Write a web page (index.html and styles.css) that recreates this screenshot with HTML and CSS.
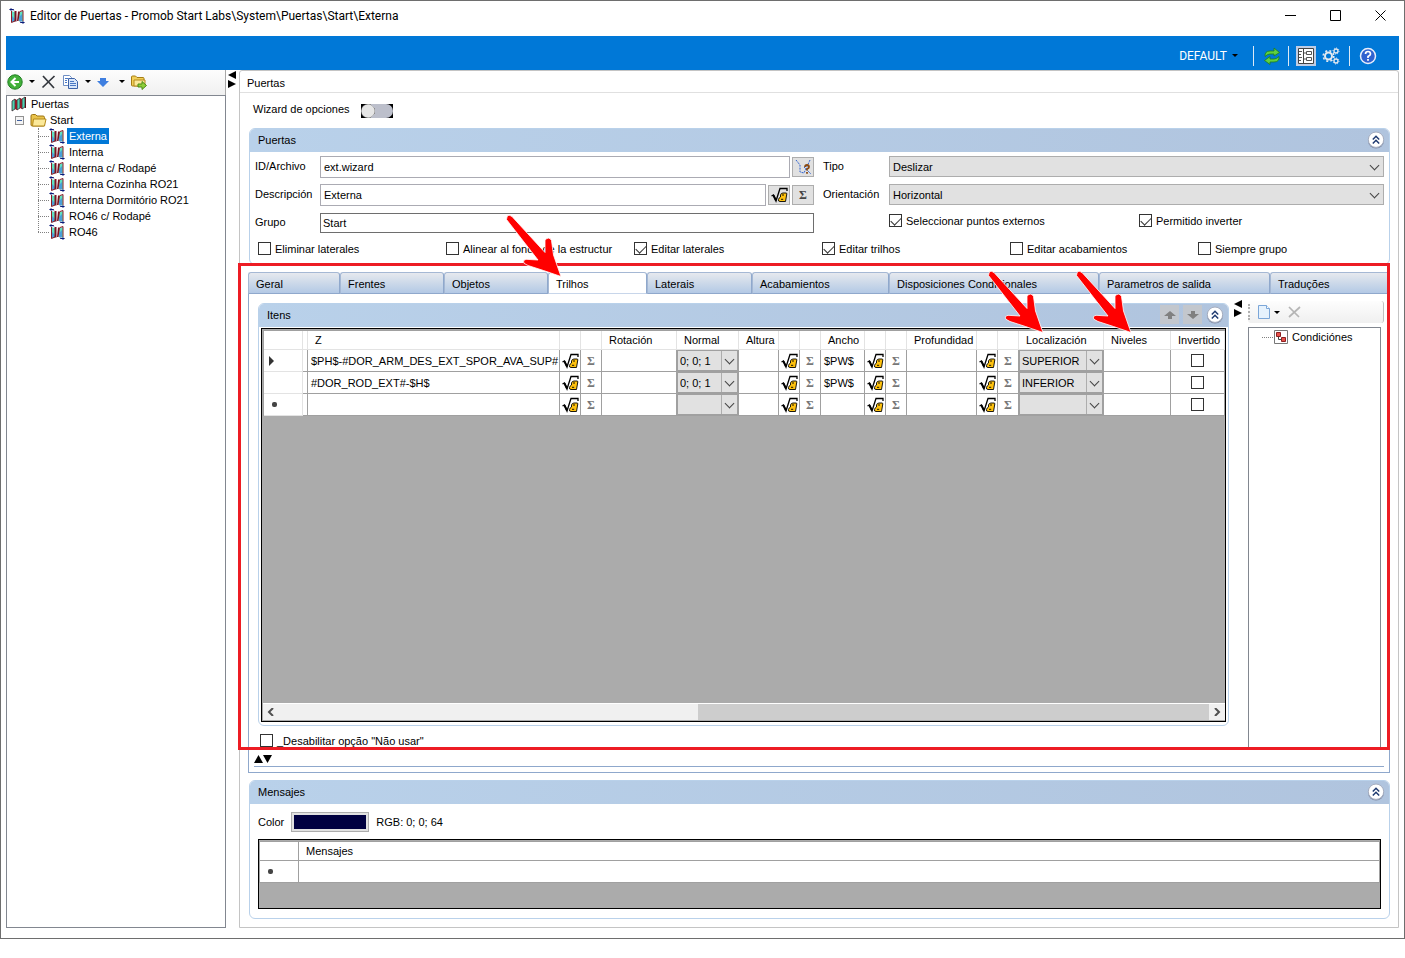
FILE: index.html
```html
<!DOCTYPE html>
<html lang="es">
<head>
<meta charset="UTF-8">
<meta name="viewport" content="width=device-width, initial-scale=1.0">
<title>Editor de Puertas</title>
<link rel="stylesheet" href="styles.css">
</head>
<body>

<!-- Shared icons -->
<svg class="sprite" aria-hidden="true">
    <symbol id="i-door" viewBox="0 0 16 16">
        <path d="M2.500 3l4 1.500v8.500l-4 1.500zM9.500 4.500L14 3v10.500l-4.500-.5z" fill="#5fe0c0"/>
        <path d="M3 8l3 3v2l-3 1zM10 9l3-3v7h-3z" fill="#4a9fd8"/>
        <path d="M5.500 3h2v10.500h-2zM9 3.500h2L9.500 13H8z" fill="#7a1220"/>
        <path d="M2.500 3v11.500M14 2.500V13M2.500 14.500l3.500-1.500M11 3.500l3-1" stroke="#8c1b28" fill="none"/>
        <path d="M0 1.500L2.500 0v1h2l1 1.500-3-.5v1zM16 14.500L13.500 16v-1h-2l-1-1.500 3 .5v-1z" fill="#0a1a78"/>
    </symbol>
    <symbol id="i-root" viewBox="0 0 16 16">
        <path d="M1 5l3-2v10l-3 2zM6 4l3-2v10l-3 2zM11 3l3-2v10l-3 2z" fill="#4fd0b0" stroke="#3a2a30" stroke-width=".8"/>
        <path d="M4 3l2 1v10l-2-1zM9 2l2 1v10l-2-1z" fill="#8c1b28"/>
        <path d="M14.500 1v11" stroke="#5a1018"/>
    </symbol>
    <symbol id="i-folder" viewBox="0 0 17 16">
        <path d="M1 4q0-1.500 1.500-1.500h3L7 4h6q1.500 0 1.500 1.500V13q0 1-1 1h-11Q1 14 1 13z" fill="#e9c34c" stroke="#9c7412"/>
        <path d="M3.500 7h12.500l-1.500 7H2.500z" fill="#fbe99a" stroke="#b58a1c"/>
    </symbol>
    <symbol id="i-formula" viewBox="0 0 17 16">
        <path d="M.5 9l2-1 2.500 6L9 1.500h7V4" fill="none" stroke="#000" stroke-width="1.300"/>
        <path d="M2.500 8.500l2.500 5" stroke="#000" stroke-width="2"/>
        <path d="M9.500 8Q10 6 12 6h3q1 0 .8 1L14.500 14.500H9q-2 0-1.500-2T9.500 10z" fill="#ffc20e" stroke="#000" stroke-width=".9"/>
        <path d="M11 8h2M10 12.300h2.200" stroke="#000" stroke-width=".9"/>
    </symbol>
    <symbol id="i-up2" viewBox="0 0 18 18">
        <circle cx="9" cy="9.500" r="8" fill="#7f8ba6"/>
        <circle cx="9" cy="8.700" r="7.700" fill="#fff" stroke="#a5adbf"/>
        <path d="M5.800 8.500L9 5.300l3.200 3.200M5.800 12.500L9 9.300l3.200 3.200" fill="none" stroke="#1f3a70" stroke-width="1.500"/>
    </symbol>
    <symbol id="i-arrow" viewBox="0 0 56 64">
        <path d="M.5 5.500L32 46 20 45.300q-4 1-2 4L22 51.500 37.500 56.500 55 62.500 52 54 47.500 41 45.500 26.500q-2.500-4.500-6.500-.5V38.500L6 2.500Q1-1 .5 5.500z" fill="#ff0000" stroke="#fff" stroke-width=".8"/>
    </symbol>
</svg>

<div class="window">
    <header class="titlebar">
        <svg class="icon"><use href="#i-door"/></svg>
        <h1>Editor de Puertas - Promob Start Labs\System\Puertas\Start\Externa</h1>
        <div class="window-buttons">
            <button aria-label="Minimizar"><svg viewBox="0 0 11 11"><path d="M0 5.500h11"/></svg></button>
            <button aria-label="Maximizar"><svg viewBox="0 0 11 11"><path d="M.5.500h10v10H.5z"/></svg></button>
            <button aria-label="Cerrar"><svg viewBox="0 0 11 11"><path d="M.5.500l10 10M10.500.500l-10 10"/></svg></button>
        </div>
    </header>

    <div class="ribbon">
        <button class="profile">DEFAULT<i class="caret"></i></button>
        <i class="sep"></i>
        <button class="tool refresh" aria-label="Actualizar">
            <svg viewBox="0 0 18 18"><path d="M2 9.500Q1.500 4 7 4h4V1l5.500 4.500L11 9V7H7Q4.500 7 2 9.500z" fill="#5fd040" stroke="#1c7d1c" stroke-width=".8"/><path d="M16 9.500q.5 5.500-5 5.500H7v2.500L1.500 13.500 7 9.500V12h4q2.500 0 5-2.500z" fill="#5fd040" stroke="#1c7d1c" stroke-width=".8"/></svg>
        </button>
        <i class="sep"></i>
        <button class="tool active" aria-label="Propiedades">
            <svg viewBox="0 0 18 18"><path d="M1.500 1.500h15v15h-15zM6.500 2v14" fill="#fff" stroke="#444"/><path d="M2 4.500h3M2 7.500h2M2 10.500h3M2 13.500h2M9.500 4.500h5v3h-5zM9.500 10.500h5v3h-5zM7 6h2M7 12h2" fill="none" stroke="#555"/></svg>
        </button>
        <button class="tool" aria-label="Opciones">
            <svg viewBox="0 0 18 18" fill="none" stroke="#e4e9f0"><circle cx="6.500" cy="9" r="3.500" stroke-width="2"/><circle cx="6.500" cy="9" r="5.300" stroke-width="1.600" stroke-dasharray="2 2.200"/><circle cx="14" cy="4" r="2" stroke-width="1.300"/><circle cx="14" cy="4" r="3" stroke-dasharray="1 1.300"/><circle cx="14" cy="14" r="2" stroke-width="1.300"/><circle cx="14" cy="14" r="3" stroke-dasharray="1 1.300"/></svg>
        </button>
        <i class="sep"></i>
        <button class="tool help" aria-label="Ayuda">
            <svg viewBox="0 0 18 18"><circle cx="9" cy="9" r="7.500" fill="#2f62d0" stroke="#e8eefb" stroke-width="1.500"/><path d="M6.500 7q0-2.500 2.500-2.500T11.500 7Q11.500 8.300 9 9.500V11" fill="none" stroke="#fff" stroke-width="1.700"/><path d="M8.100 12h1.800v1.700H8.100z" fill="#fff"/></svg>
        </button>
    </div>

    <div class="workspace">
        <aside class="sidebar">
            <div class="toolbar">
                <button aria-label="Volver"><svg viewBox="0 0 16 16"><circle cx="8" cy="8" r="7.200" fill="#42b03a" stroke="#1f7f22"/><path d="M12 8H5M8.500 4L4.500 8l4 4" fill="none" stroke="#fff" stroke-width="2"/></svg></button>
                <i class="caret"></i>
                <button aria-label="Eliminar"><svg viewBox="0 0 16 16"><path d="M2 2l11 12M13.500 2L1.500 13.500" stroke="#33373d" stroke-width="1.700"/></svg></button>
                <button aria-label="Copiar"><svg viewBox="0 0 16 16"><path d="M.5 1.500h6l2 2v8h-8z" fill="#fff" stroke="#6f8fc4"/><path d="M5.500 4.500h6l3 3v7h-9z" fill="#d8e6fa" stroke="#3c62a8"/><path d="M2 4.500h3M2 6.500h2M2 8.500h2M7 7.500h4M7 9.500h6M7 11.500h6" stroke="#4a78c4"/></svg></button>
                <i class="caret"></i>
                <button aria-label="Mover"><svg viewBox="0 0 16 16"><path d="M3 4h6v3h3l-6 6-6-6h3z" fill="#3f7fe0"/></svg></button>
                <i class="caret"></i>
                <button aria-label="Exportar"><svg viewBox="0 0 16 16"><path d="M.5 3q0-1 1-1h3L6 3.500h6q1 0 1 1V12H1.500q-1 0-1-1z" fill="#f2cf58" stroke="#a57d13"/><path d="M3 6h11v6H3z" fill="#fbe99a" stroke="#b58a1c"/><path d="M7 10h4V7.500l4.500 4-4.500 4V13H7z" fill="#8fce3a" stroke="#4b8b15"/></svg></button>
            </div>
            <div class="tree">
                <div class="node root"><svg class="icon"><use href="#i-root"/></svg>Puertas</div>
                <div class="node folder"><i class="minus"></i><svg class="icon"><use href="#i-folder"/></svg>Start</div>
                <ul>
                    <li><svg class="icon"><use href="#i-door"/></svg><span class="selected">Externa</span></li>
                    <li><svg class="icon"><use href="#i-door"/></svg><span>Interna</span></li>
                    <li><svg class="icon"><use href="#i-door"/></svg><span>Interna c/ Rodapé</span></li>
                    <li><svg class="icon"><use href="#i-door"/></svg><span>Interna Cozinha RO21</span></li>
                    <li><svg class="icon"><use href="#i-door"/></svg><span>Interna Dormitório RO21</span></li>
                    <li><svg class="icon"><use href="#i-door"/></svg><span>RO46 c/ Rodapé</span></li>
                    <li><svg class="icon"><use href="#i-door"/></svg><span>RO46</span></li>
                </ul>
            </div>
        </aside>

        <div class="splitter"><svg viewBox="0 0 9 18"><path d="M8 0v8L0 4zM0 9v8l8-4z"/></svg></div>

        <main class="editor">
            <h2>Puertas</h2>
            <div class="content">
                <div class="wizard">
                    <label for="wizard">Wizard de opciones</label>
                    <input type="checkbox" id="wizard" class="toggle">
                </div>

                <section class="panel">
                    <header><h3>Puertas</h3><button class="collapse" aria-label="Contraer"><svg><use href="#i-up2"/></svg></button></header>
                    <div class="form">
                        <label for="id">ID/Archivo</label>
                        <div class="field">
                            <input type="text" id="id" value="ext.wizard">
                            <button aria-label="Asistente"><svg viewBox="0 0 17 16"><path d="M1 1l4 5v7l4 1 6-13M9 8l7 7" fill="none" stroke="#2f62d0" stroke-dasharray="2 1"/><path d="M10 8q0-2 2-2t2 2q0 1.300-2 2v1.500M12 13v1.800" fill="none" stroke="#8a4a12" stroke-width="1.800"/></svg></button>
                        </div>
                        <label for="tipo" class="second">Tipo</label>
                        <span class="combo"><select id="tipo"><option>Deslizar</option></select></span>

                        <label for="desc">Descripción</label>
                        <div class="field">
                            <input type="text" id="desc" value="Externa">
                            <button aria-label="Fórmula"><svg><use href="#i-formula"/></svg></button>
                            <button class="sigma">Σ</button>
                        </div>
                        <label for="orient" class="second">Orientación</label>
                        <span class="combo"><select id="orient"><option>Horizontal</option></select></span>

                        <label for="grupo">Grupo</label>
                        <div class="field group"><input type="text" id="grupo" value="Start"></div>
                        <div class="checks two">
                            <label><input type="checkbox" checked>Seleccionar puntos externos</label>
                            <label><input type="checkbox" checked>Permitido inverter</label>
                        </div>
                    </div>
                    <div class="checks six">
                        <label><input type="checkbox">Eliminar laterales</label>
                        <label><input type="checkbox">Alinear al fondo de la estructur</label>
                        <label><input type="checkbox" checked>Editar laterales</label>
                        <label><input type="checkbox" checked>Editar trilhos</label>
                        <label><input type="checkbox">Editar acabamientos</label>
                        <label><input type="checkbox">Siempre grupo</label>
                    </div>
                </section>

                <section class="tabs">
                    <nav>
                        <button>Geral</button>
                        <button>Frentes</button>
                        <button>Objetos</button>
                        <button class="current">Trilhos</button>
                        <button>Laterais</button>
                        <button>Acabamientos</button>
                        <button>Disposiciones Condicionales</button>
                        <button>Parametros de salida</button>
                        <button>Traduções</button>
                    </nav>
                    <div class="page">
                        <div class="columns">
                            <div class="items">
                                <section class="panel">
                                    <header>
                                        <h3>Itens</h3>
                                        <button class="move" aria-label="Subir"><svg viewBox="0 0 12 12"><path d="M6 2l6 5H8v3H4V7H0z"/></svg></button>
                                        <button class="move" aria-label="Bajar"><svg viewBox="0 0 12 12"><path d="M6 10l6-5H8V2H4v3H0z"/></svg></button>
                                        <button class="collapse" aria-label="Contraer"><svg><use href="#i-up2"/></svg></button>
                                    </header>
                                    <div class="grid">
                                        <div class="grid-body">
                                            <table class="rails">
                                                <colgroup>
                                                    <col class="w-head"><col class="w-gap"><col class="w-z"><col class="w-btn"><col class="w-btn"><col class="w-rot"><col class="w-norm"><col class="w-alt"><col class="w-btn"><col class="w-btn"><col class="w-anc"><col class="w-btn"><col class="w-btn"><col class="w-prof"><col class="w-btn"><col class="w-btn"><col class="w-loc"><col class="w-niv"><col class="w-inv">
                                                </colgroup>
                                                <thead>
                                                    <tr><th></th><th></th><th>Z</th><th></th><th></th><th>Rotación</th><th>Normal</th><th>Altura</th><th></th><th></th><th>Ancho</th><th></th><th></th><th>Profundidad</th><th></th><th></th><th>Localización</th><th>Niveles</th><th>Invertido</th></tr>
                                                </thead>
                                                <tbody>
                                                    <tr>
                                                        <td class="mark"><i class="play"></i></td><td></td><td>$PH$-#DOR_ARM_DES_EXT_SPOR_AVA_SUP#</td>
                                                        <td class="fx"><svg><use href="#i-formula"/></svg></td><td class="sum">Σ</td><td></td>
                                                        <td class="pick"><span class="combo"><select aria-label="Normal"><option>0; 0; 1</option></select></span></td><td></td>
                                                        <td class="fx"><svg><use href="#i-formula"/></svg></td><td class="sum">Σ</td><td>$PW$</td>
                                                        <td class="fx"><svg><use href="#i-formula"/></svg></td><td class="sum">Σ</td><td></td>
                                                        <td class="fx"><svg><use href="#i-formula"/></svg></td><td class="sum">Σ</td>
                                                        <td class="pick"><span class="combo"><select aria-label="Localización"><option>SUPERIOR</option></select></span></td><td></td>
                                                        <td class="check"><input type="checkbox" aria-label="Invertido"></td>
                                                    </tr>
                                                    <tr>
                                                        <td class="mark"></td><td></td><td>#DOR_ROD_EXT#-$H$</td>
                                                        <td class="fx"><svg><use href="#i-formula"/></svg></td><td class="sum">Σ</td><td></td>
                                                        <td class="pick"><span class="combo"><select aria-label="Normal"><option>0; 0; 1</option></select></span></td><td></td>
                                                        <td class="fx"><svg><use href="#i-formula"/></svg></td><td class="sum">Σ</td><td>$PW$</td>
                                                        <td class="fx"><svg><use href="#i-formula"/></svg></td><td class="sum">Σ</td><td></td>
                                                        <td class="fx"><svg><use href="#i-formula"/></svg></td><td class="sum">Σ</td>
                                                        <td class="pick"><span class="combo"><select aria-label="Localización"><option>INFERIOR</option></select></span></td><td></td>
                                                        <td class="check"><input type="checkbox" aria-label="Invertido"></td>
                                                    </tr>
                                                    <tr>
                                                        <td class="mark"><i class="dot"></i></td><td></td><td></td>
                                                        <td class="fx"><svg><use href="#i-formula"/></svg></td><td class="sum">Σ</td><td></td>
                                                        <td class="pick"><span class="combo"><select aria-label="Normal"><option></option></select></span></td><td></td>
                                                        <td class="fx"><svg><use href="#i-formula"/></svg></td><td class="sum">Σ</td><td></td>
                                                        <td class="fx"><svg><use href="#i-formula"/></svg></td><td class="sum">Σ</td><td></td>
                                                        <td class="fx"><svg><use href="#i-formula"/></svg></td><td class="sum">Σ</td>
                                                        <td class="pick"><span class="combo"><select aria-label="Localización"><option></option></select></span></td><td></td>
                                                        <td class="check"><input type="checkbox" aria-label="Invertido"></td>
                                                    </tr>
                                                </tbody>
                                            </table>
                                        </div>
                                        <div class="scrollbar">
                                            <button aria-label="Izquierda"><svg viewBox="0 0 8 8"><path d="M6 0L2 4l4 4"/></svg></button>
                                            <div class="track"><div class="thumb"></div></div>
                                            <button aria-label="Derecha"><svg viewBox="0 0 8 8"><path d="M2 0l4 4-4 4"/></svg></button>
                                        </div>
                                    </div>
                                </section>
                                <label class="disable"><input type="checkbox">_Desabilitar opção "Não usar"</label>
                            </div>
                            <div class="splitter inner"><svg viewBox="0 0 9 18"><path d="M8 0v8L0 4zM0 9v8l8-4z"/></svg></div>
                            <div class="conditions">
                                <div class="toolbar">
                                    <i class="grip"></i>
                                    <button aria-label="Nuevo"><svg viewBox="0 0 16 16"><path d="M2.500 1.500h8l3 3v10h-11z" fill="#e6f2fd" stroke="#7ba6d8"/><path d="M10.500 1.500v3h3" fill="#fff" stroke="#7ba6d8"/></svg></button>
                                    <i class="caret"></i>
                                    <button aria-label="Eliminar"><svg viewBox="0 0 16 16"><path d="M3 3l10 10M14 3L3 13" stroke="#b5b5b5" stroke-width="1.700"/></svg></button>
                                </div>
                                <div class="tree">
                                    <div class="node"><i class="dots"></i><svg class="icon" viewBox="0 0 16 16"><path d="M1.500 1.500h13v13h-13z" fill="#fff" stroke="#777"/><path d="M3.500 3.500h4v4h-4zM8.500 8.500h4v4h-4z" fill="#e8504a" stroke="#8c2020"/><path d="M5.500 8v2.500h3" fill="none" stroke="#444"/></svg>Condiciónes</div>
                                </div>
                            </div>
                        </div>
                        <div class="fold"><svg viewBox="0 0 18 9"><path d="M0 8h9L4.500 0zM9 0h9l-4.500 8z"/></svg></div>
                    </div>

                    <div class="highlight"></div>
                    <svg class="pointer to-tab"><use href="#i-arrow"/></svg>
                    <svg class="pointer to-location"><use href="#i-arrow"/></svg>
                    <svg class="pointer to-levels"><use href="#i-arrow"/></svg>
                </section>

                <section class="panel messages">
                    <header><h3>Mensajes</h3><button class="collapse" aria-label="Contraer"><svg><use href="#i-up2"/></svg></button></header>
                    <div class="color-row">
                        <span>Color</span>
                        <button class="swatch" aria-label="Color"></button>
                        <span>RGB: 0; 0; 64</span>
                    </div>
                    <div class="grid">
                        <table class="log">
                            <colgroup><col class="w-head"><col></colgroup>
                            <thead><tr><th></th><th>Mensajes</th></tr></thead>
                            <tbody><tr><td class="mark"><i class="dot"></i></td><td></td></tr></tbody>
                        </table>
                    </div>
                </section>
            </div>
        </main>
    </div>
</div>

</body>
</html>
```
FILE: styles.css
```css
* {
    box-sizing: border-box;
}

body {
    margin: 0;
    background: #fff;
    color: #000;
    font: 11px/16px "Liberation Sans", Arial, sans-serif;
}

button, input, select {
    font: inherit;
    color: inherit;
    margin: 0;
    padding: 0;
}

button {
    border: none;
    background: none;
    display: flex;
    align-items: center;
    justify-content: center;
}

h1, h2, h3 {
    margin: 0;
    font-size: inherit;
    font-weight: normal;
}

svg {
    display: block;
    flex: none;
}

.sprite {
    position: absolute;
    width: 0;
    height: 0;
}

.icon {
    width: 16px;
    height: 16px;
}

.window {
    display: flex;
    flex-direction: column;
    min-height: calc(100vh - 19px);
    padding: 0 5px 10px;
    border: 1px solid #6e6e6e;
}

/* Title bar */
.titlebar {
    display: flex;
    align-items: center;
    height: 35px;
    padding: 0 13px 6px 3px;
}

.titlebar h1 {
    flex: 1;
    margin-left: 5px;
    font: 12px/16px Roboto, sans-serif;
}

.window-buttons {
    display: flex;
    gap: 34px;
}

.window-buttons svg {
    width: 11px;
    height: 11px;
    fill: none;
    stroke: #000;
}

.ribbon {
    display: flex;
    align-items: center;
    justify-content: flex-end;
    height: 34px;
    padding: 5px 21px 0 0;
    background: #0078d7;
}

.profile {
    color: #fff;
    font: 12px/16px Roboto, sans-serif;
    gap: 5px;
    margin-right: 15px;
}

.caret {
    border: 3px solid transparent;
    border-top-color: #000;
    border-bottom: none;
}

.sep {
    width: 1px;
    height: 20px;
    background: #dce9f6;
}

.tool {
    width: 20px;
    height: 20px;
}

.tool svg {
    width: 18px;
    height: 18px;
}

.tool.refresh {
    margin: 0 6px 0 8px;
}

.tool.active {
    margin: 0 5px 0 7px;
    background: #c0cde4;
}

.tool.active + .tool {
    margin-right: 8px;
}

.tool.help {
    margin-left: 8px;
}

/* Left pane */
.workspace {
    display: flex;
    flex: 1;
}

.sidebar {
    display: flex;
    flex-direction: column;
    width: 220px;
}

.toolbar {
    display: flex;
    align-items: center;
    height: 25px;
    background: linear-gradient(#fdfdfd, #f0f0f0);
}

.toolbar svg {
    width: 16px;
    height: 16px;
}

.sidebar .toolbar {
    gap: 6px;
    padding: 0 0 2px 1px;
    border-right: 1px solid #a8a8a8;
}

.tree {
    flex: 1;
    border: 1px solid #828790;
    background: #fff;
}

.node {
    display: flex;
    align-items: center;
    height: 16px;
}

.root {
    padding-left: 4px;
    gap: 4px;
}

.folder {
    padding-left: 8px;
    gap: 3px;
}

.folder .icon {
    margin-left: 3px;
    width: 17px;
}

.minus {
    width: 9px;
    height: 9px;
    border: 1px solid #919191;
    background: linear-gradient(#3f5f9f, #3f5f9f) center / 5px 1px no-repeat #f4f4f4;
}

.tree ul {
    position: relative;
    list-style: none;
    margin: 0;
    padding: 0 0 0 31px;
}

.tree ul::before {
    content: "";
    position: absolute;
    top: 0;
    bottom: 8px;
    border-left: 1px dotted #808080;
}

.tree li {
    display: flex;
    align-items: center;
    height: 16px;
}

.tree li::before,
.dots {
    content: "";
    width: 11px;
    border-top: 1px dotted #808080;
}

.tree li span {
    margin-left: 2px;
    padding: 0 2px;
}

.tree .selected {
    background: #0078d7;
    color: #fff;
}

.splitter {
    width: 13px;
    padding: 1px 0 0 2px;
}

.splitter svg {
    width: 9px;
    height: 18px;
}

/* Editor */
.editor {
    display: flex;
    flex: 1;
    flex-direction: column;
    min-width: 0;
    border: 1px solid #c4c4c4;
    border-radius: 3px 3px 0 0;
}

.editor h2 {
    height: 22px;
    padding: 4px 7px 0;
    border-bottom: 1px solid #e0e0e0;
}

.content {
    display: flex;
    flex: 1;
    flex-direction: column;
    padding: 8px 8px 8px 9px;
}

.wizard {
    display: flex;
    align-items: flex-start;
    height: 27px;
    padding-left: 4px;
}

.toggle {
    appearance: none;
    width: 32px;
    height: 14px;
    margin: 3px 0 0 11px;
    background: #000;
}

.toggle::after {
    content: "";
    display: block;
    height: 14px;
    border-radius: 7px;
    background: radial-gradient(circle at 7px 7px, #e6e6e6 6px, #888 7px, transparent 7px), #bcbfcb;
}

.panel {
    border: 1px solid #b9d1ea;
    border-radius: 6px;
}

.panel > header {
    display: flex;
    align-items: center;
    height: 23px;
    padding: 0 4px 2px 8px;
    border-radius: 5px 5px 0 0;
    background: linear-gradient(to right, #b9d1ea, #b0c4de);
}

.panel h3 {
    flex: 1;
}

.collapse svg {
    width: 18px;
    height: 18px;
}

.form {
    display: grid;
    grid-template-columns: 65px 494fr 75px 495fr;
    grid-auto-rows: 22px;
    row-gap: 6px;
    padding: 4px 5px 0;
}

.form > label {
    line-height: 20px;
}

.form .second {
    padding-left: 9px;
}

.field {
    display: flex;
    align-items: center;
    gap: 2px;
}

.field input {
    flex: 1;
    min-width: 0;
    height: 22px;
    padding: 0 3px;
    border: 1px solid #ababb3;
}

.field.group input {
    height: 20px;
    padding: 0 2px;
    border-color: #6e6e6e;
}

.field button {
    width: 22px;
    height: 20px;
    border: 1px solid #adadad;
    background: #e1e1e1;
}

.field svg,
.fx svg {
    width: 17px;
    height: 16px;
}

.sigma,
.sum {
    font: bold 12px/16px "Liberation Serif", serif;
    color: #444;
}

.combo {
    position: relative;
    display: block;
    height: 21px;
}

.combo select {
    appearance: none;
    width: 100%;
    height: 100%;
    padding: 0 18px 0 3px;
    border: 1px solid #adadad;
    border-radius: 0;
    background: #e1e1e1;
}

.combo::after {
    content: "";
    position: absolute;
    top: 6px;
    right: 6px;
    width: 6px;
    height: 6px;
    border: solid #444;
    border-width: 0 1px 1px 0;
    transform: rotate(45deg);
    pointer-events: none;
}

.checks {
    display: grid;
    align-items: center;
}

.checks.two {
    grid-column: 4;
    grid-template-columns: 250px 1fr;
    padding-bottom: 5px;
}

.checks.six {
    grid-template-columns: repeat(6, 1fr);
    height: 13px;
    margin: 8px 3px 9px 8px;
}

.checks label,
.disable {
    display: flex;
    align-items: center;
    height: 13px;
    gap: 4px;
    white-space: nowrap;
}

.checks input,
.disable input,
.check input {
    appearance: none;
    flex: none;
    width: 13px;
    height: 13px;
    border: 1px solid #333;
    background: #fff;
}

.checks input:checked::after {
    content: "";
    display: block;
    width: 9px;
    height: 5px;
    margin: 2px 0 0 1px;
    border: solid #333;
    border-width: 0 0 1px 1px;
    transform: rotate(-45deg);
}

/* Tabs */
.tabs {
    position: relative;
    display: flex;
    flex: 1;
    flex-direction: column;
    margin: 7px 0 7px -1px;
}

.tabs nav {
    display: grid;
    grid-template-columns: 92fr 104fr 104fr 99fr 105fr 137fr 210fr 171fr 120fr;
    height: 22px;
}

.tabs nav button {
    justify-content: flex-start;
    padding: 2px 0 0 7px;
    border: 1px solid #8fa8cc;
    border-top-color: #a5b8d4;
    border-left-color: #a5b8d4;
    border-radius: 3px 3px 0 0;
    background: linear-gradient(#e6e9ee, #b3c9e5);
    white-space: nowrap;
}

.tabs nav .current {
    border-bottom-color: #c8d6ea;
    background: #fff;
}

.page {
    display: flex;
    flex: 1;
    flex-direction: column;
    padding: 9px 5px 5px;
    border: 1px solid #8fa8cc;
    border-top: none;
}

.columns {
    display: flex;
    flex: 1;
    padding-left: 4px;
}

.items {
    display: flex;
    flex: 1;
    flex-direction: column;
    min-width: 0;
}

.items .panel {
    display: flex;
    flex: 1;
    flex-direction: column;
}

.move {
    width: 19px;
    height: 19px;
    margin-right: 4px;
    background: #c3c7cd;
}

.move svg {
    width: 12px;
    height: 12px;
    fill: #808080;
}

.disable {
    margin: 8px 0 1px 2px;
}

.grid {
    display: flex;
    flex-direction: column;
    padding: 1px 0 1px 1px;
    border: 1px solid #000;
    background: #ababab;
}

.items .grid {
    flex: 1;
    margin: 1px 2px 3px;
}

.grid-body {
    flex: 1;
    overflow: hidden;
}

.grid table {
    width: 100%;
    border-spacing: 0;
    table-layout: fixed;
    border: solid #a0a0a0;
    border-width: 1px 0 0 1px;
    background: #fff;
}

.w-head { width: 39px; }
.w-gap { width: 5px; }
.w-z { width: 252px; }
.w-btn { width: 21px; }
.w-rot { width: 75px; }
.w-norm { width: 62px; }
.w-alt { width: 40px; }
.w-anc { width: 44px; }
.w-prof { width: 70px; }
.w-loc { width: 85px; }
.w-niv { width: 67px; }
.w-inv { width: 54px; }

.grid th {
    height: 19px;
    padding: 0 7px;
    border: solid #e3e3e3;
    border-width: 0 1px 1px 0;
    font-weight: normal;
    text-align: left;
    white-space: nowrap;
}

.grid td {
    height: 22px;
    padding: 0 0 0 3px;
    border: solid #a0a0a0;
    border-width: 0 1px 1px 0;
    white-space: nowrap;
}

.rails td:nth-child(2),
.rails th:nth-child(2) {
    padding: 0;
}

.rails .mark {
    border-color: #e3e3e3;
}

.grid .mark {
    padding-left: 5px;
}

.play {
    display: block;
    width: 0;
    border: 5px solid transparent;
    border-left-color: #333;
    border-right: none;
}

.dot {
    display: block;
    width: 5px;
    height: 5px;
    margin-left: 3px;
    border-radius: 2px;
    background: #444;
}

.grid .fx {
    padding-left: 2px;
}

.grid .sum {
    padding: 0;
    color: #777;
    text-align: center;
}

.grid .pick {
    padding: 0;
}

.pick .combo select {
    padding: 0 16px 0 2px;
    border: 1px solid #a0a0a0;
    background: linear-gradient(#adadad, #adadad) right 15px top / 1px 100% no-repeat #e1e1e1;
}

.pick .combo::after {
    right: 5px;
}

.grid .check {
    padding: 0;
}

.check input {
    display: block;
    margin: 0 auto;
}

.scrollbar {
    display: flex;
    height: 17px;
    border-top: 1px solid #fff;
    background: #f0f0f0;
}

.scrollbar button {
    width: 16px;
}

.scrollbar svg {
    width: 8px;
    height: 8px;
    fill: none;
    stroke: #505050;
    stroke-width: 2;
}

.track {
    flex: 1;
}

.thumb {
    width: 55%;
    height: 100%;
    margin-left: auto;
    background: #cdcdcd;
}

.splitter.inner {
    width: 19px;
    padding: 0 0 0 5px;
    margin-top: -3px;
}

.conditions {
    display: flex;
    flex-direction: column;
    width: 136px;
}

.conditions .toolbar {
    height: 22px;
    margin: -2px 0 4px;
    border-right: 1px solid #c0c0c0;
    border-radius: 3px;
}

.grip {
    height: 16px;
    margin-right: 6px;
    border-left: 2px dotted #b0b0b0;
}

.conditions .toolbar .caret {
    margin: 0 6px 0 2px;
}

.conditions .tree {
    margin-right: 3px;
    padding: 1px 0 0 13px;
}

.conditions .icon {
    margin-right: 3px;
}

.fold {
    margin-top: 5px;
    height: 14px;
    padding-top: 2px;
    border-bottom: 1px solid #8fa8cc;
}

.fold svg {
    width: 18px;
    height: 9px;
}

/* Red marks over the rails tab */
.highlight {
    position: absolute;
    top: -9px;
    right: 0;
    bottom: 23px;
    left: -10px;
    border: 3px solid #ed1c24;
    pointer-events: none;
}

.pointer {
    position: absolute;
    width: 56px;
    height: 64px;
    pointer-events: none;
}

.to-tab {
    top: -58px;
    left: 258px;
}

.to-location {
    top: -2px;
    left: 740px;
}

.to-levels {
    top: -2px;
    left: 828px;
}

/* Messages */
.color-row {
    display: flex;
    align-items: center;
    height: 20px;
    margin: 8px 8px 7px;
    gap: 7px;
}

.swatch {
    width: 78px;
    height: 20px;
    border: 1px solid #adadad;
    background: #000040;
    box-shadow: inset 0 0 0 2px #e1e1e1;
}

.messages .grid {
    height: 70px;
    margin: 0 8px 9px;
    padding-left: 0;
}

.log tr > * {
    border-color: #a0a0a0;
}
```
